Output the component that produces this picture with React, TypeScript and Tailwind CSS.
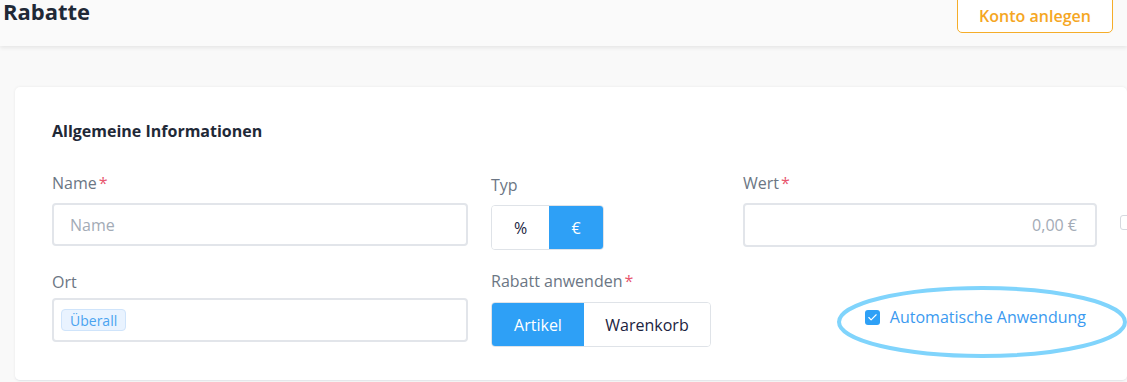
import { Check } from "lucide-react";

const font = { fontFamily: '"Open Sans", "Noto Sans", sans-serif' };

const Label = ({ text, required, mb = "mb-[9px]" }: { text: string; required?: boolean; mb?: string }) => (
  <div className={`text-[16px] leading-[22px] text-[#6b7684] ${mb}`}>
    {text}
    {required && <span className="text-[#e8566e] ml-[2px]">*</span>}
  </div>
);

const Segmented = ({
  items,
  active,
}: {
  items: { label: string; w: string }[];
  active: number;
}) => (
  <div className="flex h-[45px] w-fit rounded-[4px] border border-[#dfe3e8] overflow-hidden">
    {items.map((it, i) => (
      <div
        key={it.label}
        className={`${it.w} flex items-center justify-center text-[16px] ${
          i === active ? "bg-[#2ea0f6] text-white" : "bg-white text-[#1b2340]"
        }`}
      >
        {it.label}
      </div>
    ))}
  </div>
);

export default function App() {
  return (
    <div style={font} className="w-[1127px] h-[382px] overflow-hidden bg-[#f9f9f9] relative">
      <header className="h-[46px] bg-[#fafafa] shadow-[0_2px_4px_rgba(0,0,0,0.08)] flex items-start justify-between pl-[3px] pr-[14px] relative z-10">
        <h1 className="text-[22px] leading-[22px] font-bold text-[#1f2937]">Rabatte</h1>
        <button className="-mt-[11px] h-[44px] w-[156px] rounded-[5px] border border-[#f5ad2a] bg-white text-[#f5a623] text-[16px] font-semibold pt-[10px]">
          Konto anlegen
        </button>
      </header>

      <div className="ml-[15px] mt-[41px] bg-white rounded-[5px] shadow-[0_0_3px_rgba(0,0,0,0.07)] h-[294px] pl-[37px] pt-[34px] border-b border-[#e5e7eb]">
        <h2 className="text-[16px] leading-[20px] font-bold text-[#1f2937]">Allgemeine Informationen</h2>

        <div className="mt-[31px] grid grid-cols-[416px_229px_354px_auto] gap-x-[23px] gap-y-[21px]">
          <div>
            <Label text="Name" required />
            <div className="h-[43px] rounded-[4px] border-2 border-[#e2e5ea] flex items-center px-[16px] text-[16px] text-[#a3abb6]">
              Name
            </div>
          </div>
          <div className="pt-[2px]">
            <Label text="Typ" />
            <Segmented
              items={[
                { label: "%", w: "w-[57px]" },
                { label: "€", w: "w-[54px]" },
              ]}
              active={1}
            />
          </div>
          <div>
            <Label text="Wert" required />
            <div className="h-[44px] rounded-[4px] border-2 border-[#e2e5ea] flex items-center justify-end px-[18px] text-[16px] text-[#a3abb6]">
              0,00 €
            </div>
          </div>
          <div className="pt-[43px]">
            <div className="w-[14px] h-[15px] rounded-[3px] border border-[#d5d9df] bg-white" />
          </div>

          <div>
            <Label text="Ort" mb="mb-[5px]" />
            <div className="h-[44px] rounded-[4px] border-2 border-[#e2e5ea] flex items-center px-[7px]">
              <span className="h-[22px] flex items-center px-[8px] rounded-[4px] bg-[#e9f3ff] border border-[#cfe4fb] text-[14px] text-[#4aa3f0]">
                Überall
              </span>
            </div>
          </div>
          <div className="-mt-[1px]">
            <Label text="Rabatt anwenden" required mb="mb-[10px]" />
            <Segmented
              items={[
                { label: "Artikel", w: "w-[92px]" },
                { label: "Warenkorb", w: "w-[126px]" },
              ]}
              active={0}
            />
          </div>
          <div className="flex items-start justify-end pt-[36px] pr-[11px]">
            <div className="flex items-center gap-[10px] relative">
              <span className="w-[15px] h-[15px] rounded-[3px] bg-[#2ea0f6] flex items-center justify-center">
                <Check className="w-[11px] h-[11px] text-white" strokeWidth={2.5} />
              </span>
              <span className="text-[16px] leading-[20px] text-[#3b9af0]">Automatische Anwendung</span>
            </div>
          </div>
          <div />
        </div>
      </div>

      <svg className="absolute left-[836px] top-[285px] pointer-events-none" width="292" height="76" viewBox="0 0 292 76">
        <ellipse cx="146" cy="37" rx="143" ry="34" fill="none" stroke="#80d4fc" strokeWidth="4" />
      </svg>
    </div>
  );
}
